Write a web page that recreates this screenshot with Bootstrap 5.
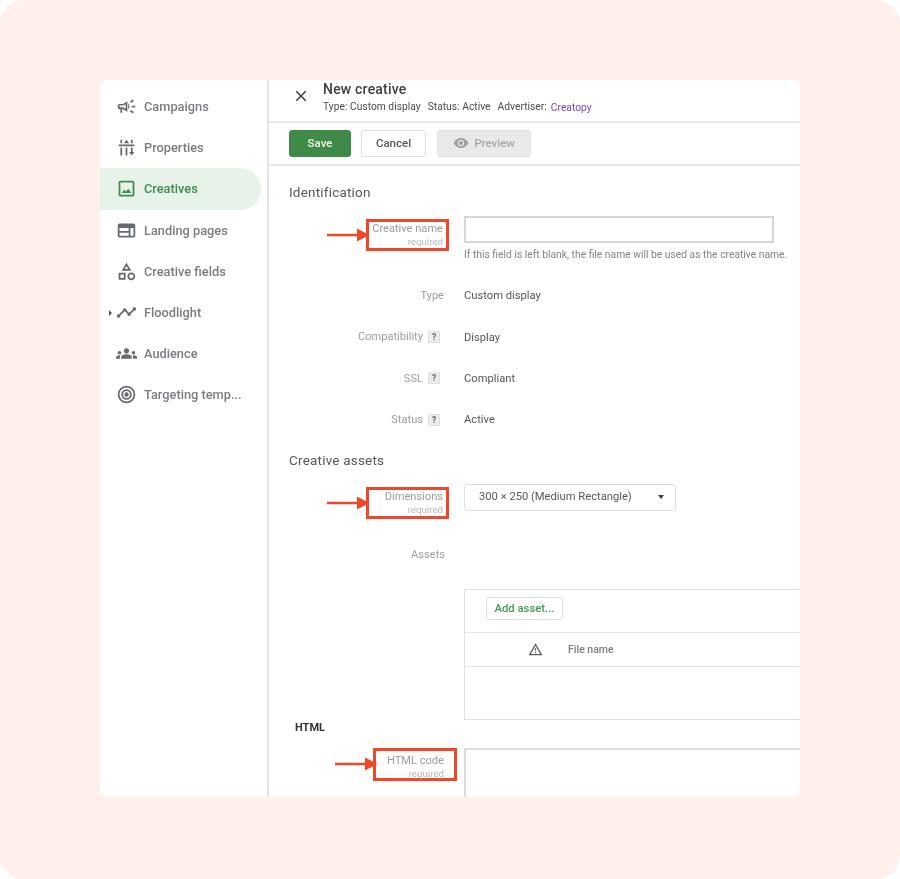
<!DOCTYPE html>
<html lang="en">
<head>
    <meta charset="UTF-8">
    <meta name="viewport" content="width=device-width, initial-scale=1.0">
    <title>New creative</title>
    <link href="https://cdn.jsdelivr.net/npm/bootstrap@5.3.0/dist/css/bootstrap.min.css" rel="stylesheet">
    <style>
        body { background: #fff; font-family: Roboto, "Liberation Sans", sans-serif; }
        .page-bg { height: 879px; background: #fff0ec; border-radius: 24px; padding-top: 80px; }
        .panel { width: 700px; height: 717px; background: #fff; border-radius: 8px; overflow: hidden; margin: 0 auto; }
        .text-soft { filter: blur(.35px); }

        /* sidebar */
        .side { width: 169px; flex: none; border-right: 2px solid #e3e4e5; padding-top: 6px; }
        .side-item { height: 41.2px; width: 161px; display: flex; align-items: center; padding-left: 16px; gap: 7px; color: #797c80; font-size: 12.8px; font-weight: 500; border-radius: 0 21px 21px 0; text-decoration: none; position: relative; white-space: nowrap; }
        .side-item svg { width: 21px; height: 21px; fill: #66696d; flex: none; }
        .side-item.is-active { background: #e7f2e9; color: #3f8a4c; }
        .side-item.is-active svg { fill: #3f8a4c; }
        .side-caret { position: absolute; left: 9px; top: 18px; border-left: 3px solid #555; border-top: 3px solid transparent; border-bottom: 3px solid transparent; }

        /* header and toolbar */
        .main { flex: 1; min-width: 0; }
        .head-bar { height: 43px; border-bottom: 2px solid #e6e7e8; padding-left: 23px; }
        .head-bar svg { width: 18px; height: 18px; fill: #3c4043; margin-top: 7px; }
        .head-text { margin-left: 5px; }
        .head-title { font-size: 14px; font-weight: 500; color: #3c4043; line-height: 18px; letter-spacing: .2px; }
        .head-meta { font-size: 10.3px; color: #4a4d50; line-height: 14px; margin-top: 2px; gap: 7px; white-space: nowrap; }
        .head-meta a { color: #7d3fd6; text-decoration: none; margin-left: -3px; padding-top: 1px; }
        .tool-bar { height: 43px; border-bottom: 2px solid #e6e7e8; padding: 7px 0 0 20px; gap: 10px; }
        .tool-btn { height: 27px; font-size: 11.5px; font-weight: 500; padding: 1px 0 0; border-radius: 3px; display: flex; align-items: center; justify-content: center; }
        .btn-save { width: 62px; background: #3f8a46; color: #f3f8f3; border: 1px solid #3f8a46; }
        .btn-cancel { width: 65px; background: #fff; color: #55585b; border: 1px solid #dcdddf; }
        .btn-preview { width: 94px; background: #e8e9e9; color: #a5a7a9; border: 1px solid #dfe0e0; gap: 5px; margin-left: 1px; }
        .btn-preview svg { width: 16px; height: 16px; fill: #9c9ea0; margin-top: -2px; }

        /* form */
        .form-area { padding-top: 16px; }
        .sect-title { font-size: 13.5px; line-height: 20px; color: #55585b; margin: 0 0 0 20px; letter-spacing: .2px; font-weight: 400; }
        .form-line { display: flex; }
        .label-col { width: 180px; flex: none; display: flex; justify-content: flex-end; align-items: center; }
        .value-col { margin-left: 15px; min-width: 0; flex: 1; }
        .field-name { font-size: 11.1px; line-height: 13px; color: #9b9c9e; text-align: right; }
        .field-req { font-size: 9.7px; line-height: 13px; color: #b5b6b8; text-align: right; }
        .info-line { height: 41.3px; align-items: center; }
        .info-line .label-col { padding-right: 5px; padding-bottom: 1px; }
        .info-line .has-help { padding-right: 9px; gap: 5px; }
        .value-text { font-size: 11.2px; color: #54575a; padding-top: 1px; }
        .help-box { width: 12px; height: 12px; background: #ececec; border: 1px solid #e0e0e0; color: #666; font-size: 8.5px; font-weight: 700; line-height: 10px; text-align: center; }
        .req-box { width: 83px; height: 32px; border: 3px solid #f0472a; padding: 0 3px 0 0; display: flex; flex-direction: column; justify-content: center; margin-left: -4px; }
        .req-box-top { padding-bottom: 1px; }
        .req-box-wide { width: 84px; height: 33px; padding: 6px 10px 0 0; margin-right: -8px; margin-left: -5px; }
        .req-arrow { width: 43px; height: 14px; flex: none; position: relative; z-index: 1; }
        .name-input { width: 310px; height: 27px; border: 2px solid #d5d6d7; border-radius: 0; padding: 0 6px; }
        .help-text { font-size: 10.3px; line-height: 14px; color: #818386; margin-top: 4px; padding-top: 1px; white-space: nowrap; }
        .dim-select { width: 212px; height: 27px; border: 1px solid #dedfe0; border-radius: 3px; padding: 0 11px 0 14px; font-size: 11.2px; color: #55585b; }
        .dim-caret { border-top: 4px solid #3c4043; border-left: 3px solid transparent; border-right: 3px solid transparent; }
        .asset-table { height: 131px; border: 1px solid #e0e1e2; border-right: 0; }
        .asset-top { height: 43px; padding: 7px 0 0 21px; border-bottom: 1px solid #e6e7e8; }
        .btn-add { display: block; width: 77px; height: 23px; border: 1px solid #dcdddf; border-radius: 3px; background: #fff; color: #3f9a50; font-size: 11.3px; font-weight: 500; padding: 1px 0 0; }
        .asset-head { height: 34px; border-bottom: 1px solid #e6e7e8; font-size: 10.5px; color: #7c7e81; font-weight: 500; }
        .asset-head svg { width: 15px; height: 15px; fill: #55585b; margin-left: 63px; margin-right: 25px; }
        .html-title { font-size: 11px; font-weight: 700; line-height: 14px; color: #333; margin: 1px 0 0 26px; }
        .code-box { height: 60px; border: 2px solid #dcdddf; border-right: 0; }

        /* vertical rhythm of the form */
        .mt-name { margin-top: 14px; }
        .box-offset { margin-top: 3px; }
        .info-group { margin-top: 13.5px; }
        .assets-title { margin-top: 9.3px; }
        .assets-line { margin-top: 26px; height: 20px; }
        .table-line { margin-top: 24px; }
        .code-line { margin-top: 13px; }
    </style>
</head>
<body>
    <div class="page-bg">
        <div class="panel d-flex">
            <!-- Sidebar -->
            <nav class="side">
                <a href="#" class="side-item text-soft"><svg viewBox="0 0 24 24"><path d="M18 11v2h4v-2h-4zm-2 6.61c.96.71 2.21 1.65 3.2 2.4.4-.53.8-1.07 1.2-1.6-.99-.74-2.24-1.68-3.2-2.4-.4.54-.8 1.08-1.2 1.6zM20.4 5.6c-.4-.53-.8-1.07-1.2-1.6-.99.74-2.24 1.68-3.2 2.4.4.53.8 1.07 1.2 1.6.96-.72 2.21-1.65 3.2-2.4zM4 9c-1.1 0-2 .9-2 2v2c0 1.1.9 2 2 2h1v4h2v-4h1l5 3V6L8 9H4zm5.03 1.71L11 9.53v4.94l-1.97-1.18-.48-.29H4v-2h4.55l.48-.29zM15.5 12c0-1.33-.58-2.53-1.5-3.35v6.69c.92-.81 1.5-2.01 1.5-3.34z"/></svg>Campaigns</a>
                <a href="#" class="side-item text-soft"><svg viewBox="0 0 24 24"><path d="M5 3h2v4H5zM3 8.500h6v2H3zM5 12h2v9H5zM9 7h6l-3-4zM9 8.500h6v2H9zM11 12h2v9h-2zM17 3h2v4h-2zM15 8.500h6v2h-6zM17 12h2v5h-2zM15 17h6l-3 4z"/></svg>Properties</a>
                <a href="#" class="side-item is-active text-soft"><svg viewBox="0 0 24 24"><path d="M19 3H5c-1.1 0-2 .9-2 2v14c0 1.1.9 2 2 2h14c1.1 0 2-.9 2-2V5c0-1.1-.9-2-2-2zm0 16H5V5h14v14zm-5.04-6.71l-2.75 3.54-1.96-2.36L6.5 17h11l-3.54-4.71z"/></svg>Creatives</a>
                <a href="#" class="side-item text-soft"><svg viewBox="0 0 24 24"><path d="M20 4H4c-1.1 0-1.99.9-1.99 2L2 18c0 1.1.9 2 2 2h16c1.1 0 2-.9 2-2V6c0-1.1-.9-2-2-2zM4 9h10.5v3.5H4V9zm0 5.5h10.5V18H4v-3.5zM20 18h-3.5V9H20v9z"/></svg>Landing pages</a>
                <a href="#" class="side-item text-soft"><svg viewBox="0 0 24 24"><path d="M12 2l-5.5 9h11L12 2zm0 3.84L13.93 9h-3.87L12 5.84zM17.5 13c-2.49 0-4.5 2.01-4.5 4.5s2.01 4.5 4.5 4.5 4.5-2.01 4.5-4.5-2.01-4.5-4.5-4.5zm0 7c-1.38 0-2.5-1.12-2.5-2.5s1.12-2.5 2.5-2.5 2.5 1.12 2.5 2.5-1.12 2.5-2.5 2.5zM3 21.5h8v-8H3v8zm2-6h4v4H5v-4z"/></svg>Creative fields</a>
                <a href="#" class="side-item text-soft"><span class="side-caret"></span><svg viewBox="0 0 24 24"><path d="M23 8c0 1.1-.9 2-2 2-.18 0-.35-.02-.51-.07l-3.56 3.55c.05.16.07.34.07.52 0 1.1-.9 2-2 2s-2-.9-2-2c0-.18.02-.36.07-.52l-2.55-2.55c-.16.05-.34.07-.52.07s-.36-.02-.52-.07l-4.55 4.56c.05.16.07.33.07.51 0 1.1-.9 2-2 2s-2-.9-2-2 .9-2 2-2c.18 0 .35.02.51.07l4.56-4.55C8.02 9.36 8 9.18 8 9c0-1.1.9-2 2-2s2 .9 2 2c0 .18-.02.36-.07.52l2.55 2.55c.16-.05.34-.07.52-.07s.36.02.52.07l3.55-3.56C19.02 8.35 19 8.18 19 8c0-1.1.9-2 2-2s2 .9 2 2z"/></svg>Floodlight</a>
                <a href="#" class="side-item text-soft"><svg viewBox="0 0 24 24"><path d="M12 12.75c1.63 0 3.07.39 4.24.9 1.08.48 1.76 1.56 1.76 2.73V18H6v-1.61c0-1.18.68-2.26 1.76-2.73 1.17-.52 2.61-.91 4.24-.91zM4 13c1.1 0 2-.9 2-2s-.9-2-2-2-2 .9-2 2 .9 2 2 2zm1.13 1.1c-.37-.06-.74-.1-1.13-.1-.99 0-1.93.21-2.78.58C.48 14.9 0 15.62 0 16.43V18h4.5v-1.61c0-.83.23-1.61.63-2.29zM20 13c1.1 0 2-.9 2-2s-.9-2-2-2-2 .9-2 2 .9 2 2 2zm4 3.43c0-.81-.48-1.53-1.22-1.85-.85-.37-1.79-.58-2.78-.58-.39 0-.76.04-1.13.1.4.68.63 1.46.63 2.29V18H24v-1.57zM12 6c1.66 0 3 1.34 3 3s-1.34 3-3 3-3-1.34-3-3 1.34-3 3-3z"/></svg>Audience</a>
                <a href="#" class="side-item text-soft"><svg viewBox="0 0 24 24"><path d="M12 2a10 10 0 1 0 0 20 10 10 0 0 0 0-20zm0 18a8 8 0 1 1 0-16 8 8 0 0 1 0 16zm0-14a6 6 0 1 0 0 12 6 6 0 0 0 0-12zm0 10a4 4 0 1 1 0-8 4 4 0 0 1 0 8zm0-6.5a2.5 2.5 0 1 0 0 5 2.5 2.5 0 0 0 0-5z"/></svg>Targeting temp...</a>
            </nav>

            <div class="main">
                <!-- Header -->
                <div class="head-bar d-flex gap-2">
                    <svg viewBox="0 0 24 24" class="flex-none"><path d="M19 6.41L17.59 5 12 10.59 6.41 5 5 6.41 10.59 12 5 17.59 6.41 19 12 13.41 17.59 19 19 17.59 13.41 12z"/></svg>
                    <div class="text-soft head-text">
                        <div class="head-title">New creative</div>
                        <div class="head-meta d-flex"><span>Type: Custom display</span><span>Status: Active</span><span>Advertiser:</span><a href="#">Creatopy</a></div>
                    </div>
                </div>

                <!-- Toolbar -->
                <div class="tool-bar d-flex text-soft">
                    <button type="button" class="btn tool-btn btn-save">Save</button>
                    <button type="button" class="btn tool-btn btn-cancel">Cancel</button>
                    <button type="button" class="btn tool-btn btn-preview"><svg viewBox="0 0 24 24"><path d="M12 4.5C7 4.5 2.73 7.61 1 12c1.73 4.39 6 7.5 11 7.5s9.27-3.11 11-7.5c-1.73-4.39-6-7.5-11-7.5zM12 17c-2.76 0-5-2.24-5-5s2.24-5 5-5 5 2.24 5 5-2.24 5-5 5zm0-8c-1.66 0-3 1.34-3 3s1.34 3 3 3 3-1.34 3-3-1.34-3-3-3z"/></svg>Preview</button>
                </div>

                <div class="form-area">
                    <h2 class="sect-title text-soft">Identification</h2>

                    <div class="form-line align-items-start mt-name">
                        <div class="label-col box-offset">
                            <svg class="req-arrow" viewBox="0 0 43 14"><path d="M0 5.800h30V.5L42.500 7 30 13.500V8.200H0z" fill="#f0472a"/></svg>
                            <div class="req-box req-box-top"><div class="field-name text-soft">Creative name</div><div class="field-req text-soft">required</div></div>
                        </div>
                        <div class="value-col">
                            <input type="text" class="name-input d-block">
                            <div class="help-text text-soft">If this field is left blank, the file name will be used as the creative name.</div>
                        </div>
                    </div>

                    <div class="text-soft info-group">
                        <div class="form-line info-line"><div class="label-col"><span class="field-name">Type</span></div><div class="value-col value-text">Custom display</div></div>
                        <div class="form-line info-line"><div class="label-col has-help"><span class="field-name">Compatibility</span><span class="help-box">?</span></div><div class="value-col value-text">Display</div></div>
                        <div class="form-line info-line"><div class="label-col has-help"><span class="field-name">SSL</span><span class="help-box">?</span></div><div class="value-col value-text">Compliant</div></div>
                        <div class="form-line info-line"><div class="label-col has-help"><span class="field-name">Status</span><span class="help-box">?</span></div><div class="value-col value-text">Active</div></div>
                    </div>

                    <h2 class="sect-title text-soft assets-title">Creative assets</h2>

                    <div class="form-line align-items-start mt-name">
                        <div class="label-col box-offset">
                            <svg class="req-arrow" viewBox="0 0 43 14"><path d="M0 5.800h30V.5L42.500 7 30 13.500V8.200H0z" fill="#f0472a"/></svg>
                            <div class="req-box"><div class="field-name text-soft">Dimensions</div><div class="field-req text-soft">required</div></div>
                        </div>
                        <div class="value-col">
                            <div class="dim-select d-flex align-items-center justify-content-between"><span class="text-soft">300 × 250 (Medium Rectangle)</span><span class="dim-caret"></span></div>
                        </div>
                    </div>

                    <div class="form-line text-soft assets-line">
                        <div class="label-col pe-1"><span class="field-name">Assets</span></div>
                    </div>

                    <div class="form-line table-line">
                        <div class="label-col"></div>
                        <div class="value-col">
                            <div class="asset-table">
                                <div class="asset-top"><button type="button" class="btn btn-add text-soft">Add asset...</button></div>
                                <div class="asset-head d-flex align-items-center text-soft"><svg viewBox="0 0 24 24"><path d="M12 5.990L19.530 19H4.470L12 5.990M12 2L1 21h22L12 2zm1 14h-2v2h2v-2zm0-6h-2v4h2v-4z"/></svg>File name</div>
                            </div>
                        </div>
                    </div>

                    <h3 class="html-title text-soft">HTML</h3>

                    <div class="form-line align-items-start code-line">
                        <div class="label-col">
                            <svg class="req-arrow" viewBox="0 0 43 14"><path d="M0 5.800h30V.5L42.500 7 30 13.500V8.200H0z" fill="#f0472a"/></svg>
                            <div class="req-box req-box-wide"><div class="field-name text-soft">HTML code</div><div class="field-req text-soft">required</div></div>
                        </div>
                        <div class="value-col"><div class="code-box"></div></div>
                    </div>
                </div>
            </div>
        </div>
    </div>
    <script src="https://cdn.jsdelivr.net/npm/bootstrap@5.3.0/dist/js/bootstrap.bundle.min.js"></script>
</body>
</html>
